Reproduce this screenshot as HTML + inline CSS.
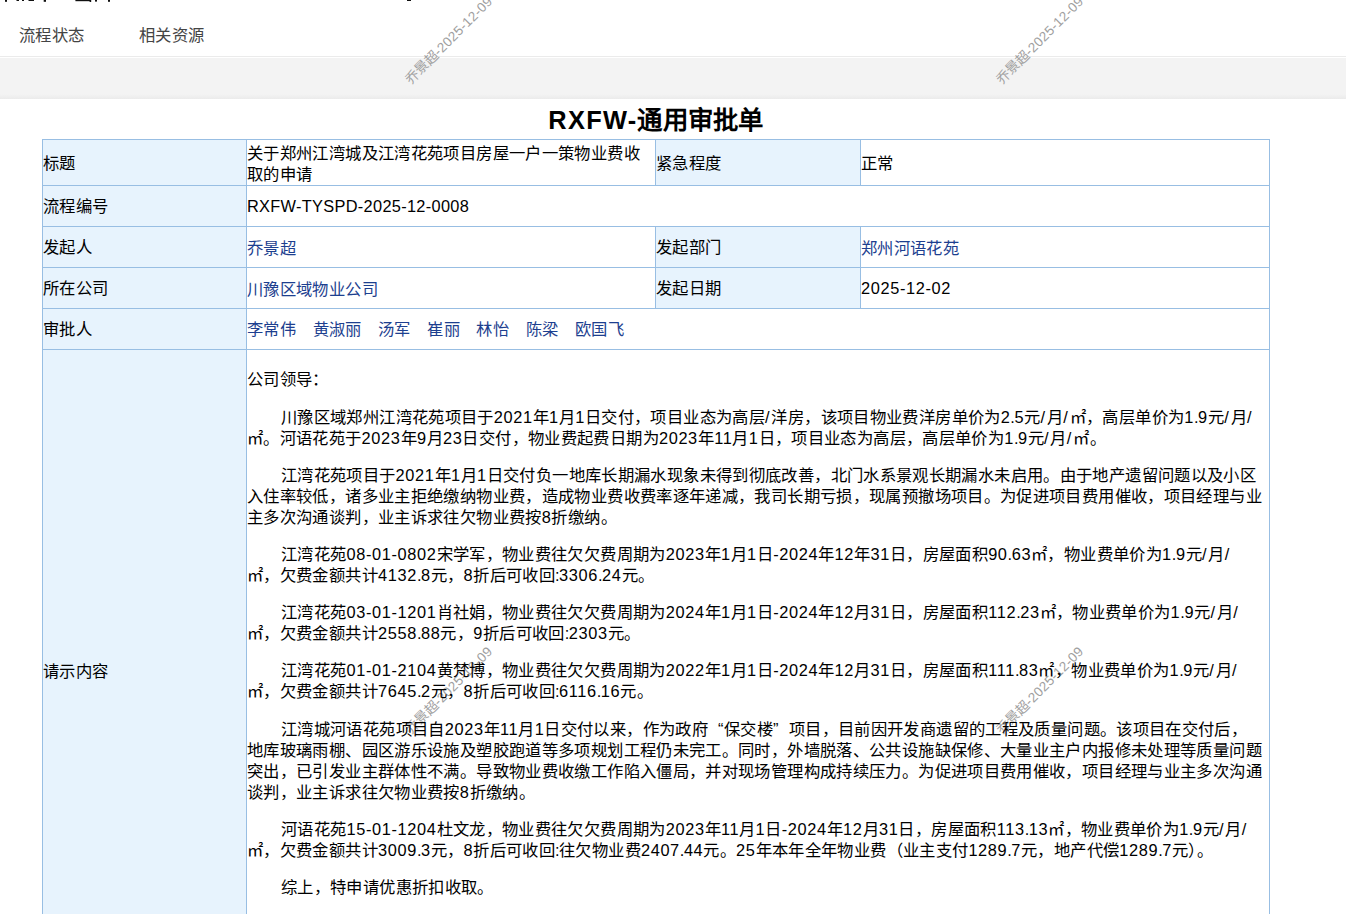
<!DOCTYPE html>
<html lang="zh-CN">
<head>
<meta charset="utf-8">
<title>RXFW-通用审批单</title>
<style>
html,body{margin:0;padding:0;background:#fff;}
html,body{width:1346px;height:914px;overflow:hidden;}
.page{width:1346px;height:914px;overflow:hidden;position:relative;font-family:"Liberation Sans",sans-serif;font-size:16.35px;letter-spacing:0.37px;color:#000;}
.n{letter-spacing:0.64px;}
.s{letter-spacing:1.85px;}
.d{letter-spacing:-0.5px;}
.ql{margin-left:10px;}
.qr{margin-right:10px;}
.cut{position:absolute;left:0;top:0;}
.tab{position:absolute;top:24px;line-height:22px;color:#444;white-space:nowrap;}
.line1{position:absolute;left:0;top:56px;width:1346px;height:1px;background:#ebebeb;}
.band{position:absolute;left:0;top:58px;width:1346px;height:41px;background:linear-gradient(#f3f3f3 0,#f3f3f3 36px,#ebebeb 41px);}
h1{position:absolute;left:0;top:103px;width:1312px;margin:0;text-align:center;font-size:25.4px;line-height:34px;font-weight:bold;white-space:nowrap;letter-spacing:0.25px;}
h1 span{letter-spacing:1.3px;}
table{z-index:2;position:absolute;left:42px;top:139px;width:1228px;border-collapse:collapse;table-layout:fixed;}
td{border:1px solid #98bee3;padding:1px 1px 1px 0;line-height:21px;vertical-align:middle;white-space:nowrap;}
td.l{background:#e7f3fd;}
tr.r1 td{height:42px;padding-top:2px;padding-bottom:1px;}
tr.r1 td.m{padding-top:3px;padding-bottom:0;}
tr.r td{height:38px;}
a{color:#1d3f8f;text-decoration:none;}
.ap a{margin-right:11.5px;}
tr.k a{position:relative;top:1.5px;}
td.c{vertical-align:top;}
td.c p{margin:16.2px 0;white-space:nowrap;}
td.c p#p0{margin:17.7px 0 17px;}
td.c p.i{text-indent:34px;}
.wm{position:absolute;font-size:13.5px;line-height:14px;color:#a0a0a0;white-space:nowrap;transform-origin:0 0;transform:rotate(-45deg);letter-spacing:0.3px;z-index:1;}
</style>
</head>
<body>
<div class="page">
<svg class="cut" width="420" height="3" viewBox="0 0 420 3"><g fill="#111"><rect x="5" y="0" width="2" height="1.8"/><rect x="16.5" y="0" width="2.5" height="1"/><rect x="22" y="0" width="2" height="1"/><rect x="28.5" y="0" width="5.5" height="1"/><rect x="43.7" y="0" width="2.3" height="1.8"/><rect x="75.4" y="0" width="15" height="1.2"/><rect x="89.6" y="0" width="1.6" height="2"/><rect x="95" y="0" width="2" height="1.6"/><rect x="108" y="0" width="2" height="1.8"/><rect x="407" y="0" width="4" height="1"/></g></svg>
<span class="tab" style="left:19px">流程状态</span><span class="tab" style="left:139px">相关资源</span>
<div class="line1"></div>
<div class="band"></div>
<h1><span>RXFW-</span>通用审批单</h1>
<table>
<colgroup><col style="width:204px"><col style="width:409px"><col style="width:205px"><col style="width:409px"></colgroup>
<tr class="r1"><td class="l">标题</td><td class="m">关于郑州江湾城及江湾花苑项目房屋一户一策物业费收<br>取的申请</td><td class="l">紧急程度</td><td>正常</td></tr>
<tr class="r"><td class="l">流程编号</td><td colspan="3"><span class="n" style="letter-spacing:0.31px">RXFW-TYSPD-2025-12-0008</span></td></tr>
<tr class="r k"><td class="l">发起人</td><td><a>乔景超</a></td><td class="l">发起部门</td><td><a>郑州河语花苑</a></td></tr>
<tr class="r k"><td class="l">所在公司</td><td><a>川豫区域物业公司</a></td><td class="l">发起日期</td><td><span class="n">2025-12-02</span></td></tr>
<tr class="r"><td class="l">审批人</td><td colspan="3" class="ap"><a>李常伟</a> <a>黄淑丽</a> <a>汤军</a> <a>崔丽</a> <a>林怡</a> <a>陈梁</a> <a>欧国飞</a></td></tr>
<tr><td class="l" style="height:640px">请示内容</td><td colspan="3" class="c">
<p id="p0">公司领导：</p>
<p class="i" id="p1">川豫区域郑州江湾花苑项目于<span class="n">2021</span>年<span class="n">1</span>月<span class="n">1</span>日交付，项目业态为高层<span class="s">/</span>洋房，该项目物业费洋房单价为<span class="n">2</span><span class="d">.</span><span class="n">5</span>元<span class="s">/</span>月<span class="s">/</span>㎡，高层单价为<span class="n">1</span><span class="d">.</span><span class="n">9</span>元<span class="s">/</span>月<span class="s">/</span><br>
㎡。河语花苑于<span class="n">2023</span>年<span class="n">9</span>月<span class="n">23</span>日交付，物业费起费日期为<span class="n">2023</span>年<span class="n">11</span>月<span class="n">1</span>日，项目业态为高层，高层单价为<span class="n">1</span><span class="d">.</span><span class="n">9</span>元<span class="s">/</span>月<span class="s">/</span>㎡。</p>
<p class="i" id="p2">江湾花苑项目于<span class="n">2021</span>年<span class="n">1</span>月<span class="n">1</span>日交付负一地库长期漏水现象未得到彻底改善，北门水系景观长期漏水未启用。由于地产遗留问题以及小区<br>
入住率较低，诸多业主拒绝缴纳物业费，造成物业费收费率逐年递减，我司长期亏损，现属预撤场项目。为促进项目费用催收，项目经理与业<br>
主多次沟通谈判，业主诉求往欠物业费按<span class="n">8</span>折缴纳。</p>
<p class="i" id="p3">江湾花苑<span class="n">08-01-0802</span>宋学军，物业费往欠欠费周期为<span class="n">2023</span>年<span class="n">1</span>月<span class="n">1</span>日<span class="n">-2024</span>年<span class="n">12</span>年<span class="n">31</span>日，房屋面积<span class="n">90</span><span class="d">.</span><span class="n">63</span>㎡，物业费单价为<span class="n">1</span><span class="d">.</span><span class="n">9</span>元<span class="s">/</span>月<span class="s">/</span><br>
㎡，欠费金额共计<span class="n">4132</span><span class="d">.</span><span class="n">8</span>元，<span class="n">8</span>折后可收回<span class="d">:</span><span class="n">3306</span><span class="d">.</span><span class="n">24</span>元。</p>
<p class="i" id="p4">江湾花苑<span class="n">03-01-1201</span>肖社娟，物业费往欠欠费周期为<span class="n">2024</span>年<span class="n">1</span>月<span class="n">1</span>日<span class="n">-2024</span>年<span class="n">12</span>月<span class="n">31</span>日，房屋面积<span class="n">112</span><span class="d">.</span><span class="n">23</span>㎡，物业费单价为<span class="n">1</span><span class="d">.</span><span class="n">9</span>元<span class="s">/</span>月<span class="s">/</span><br>
㎡，欠费金额共计<span class="n">2558</span><span class="d">.</span><span class="n">88</span>元，<span class="n">9</span>折后可收回<span class="d">:</span><span class="n">2303</span>元。</p>
<p class="i" id="p5">江湾花苑<span class="n">01-01-2104</span>黄梵博，物业费往欠欠费周期为<span class="n">2022</span>年<span class="n">1</span>月<span class="n">1</span>日<span class="n">-2024</span>年<span class="n">12</span>月<span class="n">31</span>日，房屋面积<span class="n">111</span><span class="d">.</span><span class="n">83</span>㎡，物业费单价为<span class="n">1</span><span class="d">.</span><span class="n">9</span>元<span class="s">/</span>月<span class="s">/</span><br>
㎡，欠费金额共计<span class="n">7645</span><span class="d">.</span><span class="n">2</span>元，<span class="n">8</span>折后可收回<span class="d">:</span><span class="n">6116</span><span class="d">.</span><span class="n">16</span>元。</p>
<p class="i" id="p6">江湾城河语花苑项目自<span class="n">2023</span>年<span class="n">11</span>月<span class="n">1</span>日交付以来，作为政府<span class="ql">“</span>保交楼<span class="qr">”</span>项目，目前因开发商遗留的工程及质量问题。该项目在交付后，<br>
地库玻璃雨棚、园区游乐设施及塑胶跑道等多项规划工程仍未完工。同时，外墙脱落、公共设施缺保修、大量业主户内报修未处理等质量问题<br>
突出，已引发业主群体性不满。导致物业费收缴工作陷入僵局，并对现场管理构成持续压力。为促进项目费用催收，项目经理与业主多次沟通<br>
谈判，业主诉求往欠物业费按<span class="n">8</span>折缴纳。</p>
<p class="i" id="p7">河语花苑<span class="n">15-01-1204</span>杜文龙，物业费往欠欠费周期为<span class="n">2023</span>年<span class="n">11</span>月<span class="n">1</span>日<span class="n">-2024</span>年<span class="n">12</span>月<span class="n">31</span>日，房屋面积<span class="n">113</span><span class="d">.</span><span class="n">13</span>㎡，物业费单价为<span class="n">1</span><span class="d">.</span><span class="n">9</span>元<span class="s">/</span>月<span class="s">/</span><br>
㎡，欠费金额共计<span class="n">3009</span><span class="d">.</span><span class="n">3</span>元，<span class="n">8</span>折后可收回<span class="d">:</span>往欠物业费<span class="n">2407</span><span class="d">.</span><span class="n">44</span>元。<span class="n">25</span>年本年全年物业费（业主支付<span class="n">1289</span><span class="d">.</span><span class="n">7</span>元，地产代偿<span class="n">1289</span><span class="d">.</span><span class="n">7</span>元）。</p>
<p class="i" id="p8">综上，特申请优惠折扣收取。</p>
</td></tr>
</table>
<div class="wm" style="left:403.3px;top:77px">乔景超-2025-12-09</div>
<div class="wm" style="left:993.5px;top:77px">乔景超-2025-12-09</div>
<div class="wm" style="left:403.3px;top:727px">乔景超-2025-12-09</div>
<div class="wm" style="left:993.5px;top:727px">乔景超-2025-12-09</div>
</div>
</body>
</html>
